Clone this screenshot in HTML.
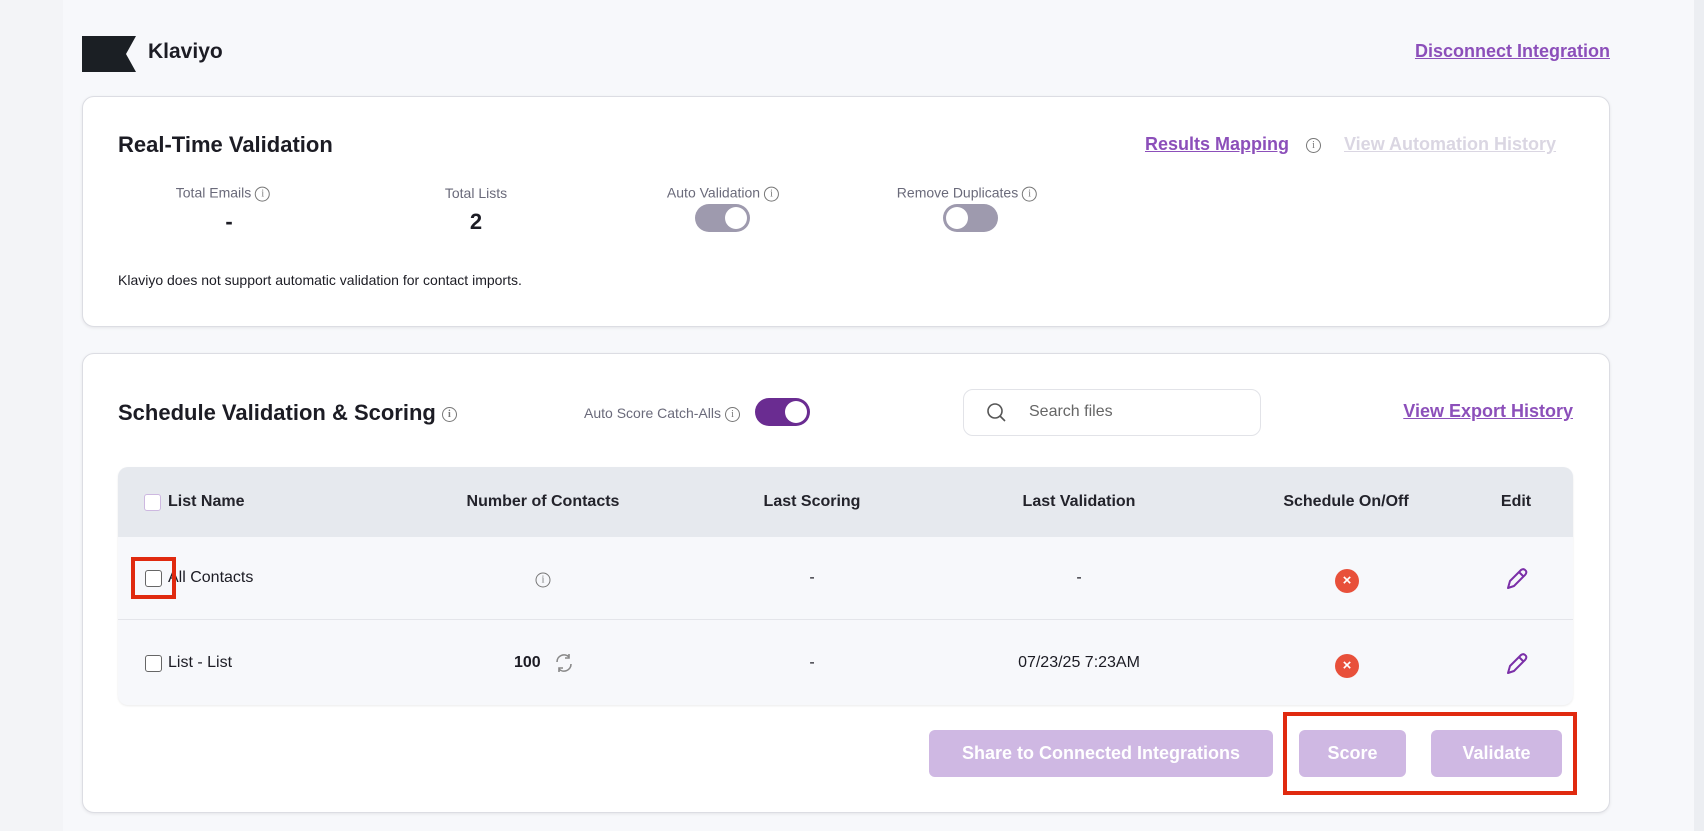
<!DOCTYPE html>
<html><head><meta charset="utf-8"><style>
*{box-sizing:border-box;margin:0;padding:0}
body{width:1704px;height:831px;overflow:hidden;background:#f7f8fb;font-family:"Liberation Sans",sans-serif;color:#1c1c24;position:relative}
.abs{position:absolute}
.lstrip{left:0;top:0;width:63px;height:831px;background:#f3f4f7}
.rstrip{left:1694px;top:0;width:10px;height:831px;background:#eceef2}
.card{position:absolute;background:#fff;border:1px solid #dcdde3;border-radius:12px;box-shadow:0 1px 3px rgba(0,0,0,.08)}
.link{color:#8c4fba;font-weight:bold;text-decoration:underline;font-size:18px;white-space:nowrap}
.t{white-space:nowrap;position:absolute;transform:translate(-50%,-50%)}
.lbl{font-size:14px;color:#6a6a7a}
.info{display:inline-block;width:15px;height:15px;border:1.3px solid #777;border-radius:50%;font-size:10px;line-height:13px;text-align:center;color:#777;font-family:"Liberation Serif",serif;vertical-align:middle;margin-left:4px}
.tog{position:absolute;width:55px;height:28px;border-radius:14px;background:#9e9aae}
.tog i{position:absolute;top:3px;width:22px;height:22px;border-radius:50%;background:#fff}
.hd{font-size:16px;font-weight:bold;color:#23232b}
.cb{position:absolute;width:17px;height:17px;border:1.5px solid #666;border-radius:3px;background:#fff}
.x{position:absolute;width:24px;height:24px;border-radius:50%;background:#e8503a;color:#fff;font-size:15px;font-weight:bold;text-align:center;line-height:24px}
.btn{position:absolute;top:730px;height:47px;background:#cfb8e3;border-radius:6px;color:#fff;font-weight:bold;font-size:18px;text-align:center;line-height:47px}
.red{position:absolute;border:4px solid #e02a0f}
</style></head><body>
<div class="abs lstrip"></div><div class="abs rstrip"></div>
<svg class="abs" style="left:82px;top:36px" width="54" height="36"><path d="M0 0H54L44 18L54 36H0Z" fill="#1b1f24"/></svg>
<div class="abs" style="left:148px;top:40px;font-size:21px;font-weight:bold">Klaviyo</div>
<div class="abs link" style="right:94px;top:41px">Disconnect Integration</div>

<div class="card" style="left:82px;top:96px;width:1528px;height:231px"></div>
<div class="abs" style="left:118px;top:132px;font-size:22px;font-weight:bold">Real-Time Validation</div>
<div class="abs link" style="left:1145px;top:134px">Results Mapping</div>
<span class="abs info" style="left:1302px;top:138px"> i</span>
<div class="abs" style="left:1344px;top:134px;font-size:18px;font-weight:bold;color:#dad6e2;text-decoration:underline">View Automation History</div>
<div class="t lbl" style="left:223px;top:193px">Total Emails<span class="info">i</span></div>
<div class="t" style="left:229px;top:222px;font-size:22px;font-weight:bold">-</div>
<div class="t lbl" style="left:476px;top:193px">Total Lists</div>
<div class="t" style="left:476px;top:222px;font-size:22px;font-weight:bold">2</div>
<div class="t lbl" style="left:723px;top:193px">Auto Validation<span class="info">i</span></div>
<div class="tog" style="left:695px;top:204px"><i style="right:3px"></i></div>
<div class="t lbl" style="left:967px;top:193px">Remove Duplicates<span class="info">i</span></div>
<div class="tog" style="left:943px;top:204px"><i style="left:3px"></i></div>
<div class="abs" style="left:118px;top:272px;font-size:14px">Klaviyo does not support automatic validation for contact imports.</div>

<div class="card" style="left:82px;top:353px;width:1528px;height:460px"></div>
<div class="abs" style="left:118px;top:400px;font-size:22px;font-weight:bold">Schedule Validation &amp; Scoring<span class="info" style="margin-left:6px">i</span></div>
<div class="abs lbl" style="left:584px;top:405px">Auto Score Catch-Alls<span class="info">i</span></div>
<div class="tog" style="left:755px;top:398px;background:#6a2c91"><i style="right:3px"></i></div>
<div class="abs" style="left:963px;top:389px;width:298px;height:47px;border:1px solid #e2e3e8;border-radius:10px;background:#fff"></div>
<svg class="abs" style="left:986px;top:402px" width="22" height="22"><circle cx="9" cy="9" r="7" fill="none" stroke="#555" stroke-width="1.6"/><path d="M14 14L19 19" stroke="#555" stroke-width="1.6"/></svg>
<div class="abs" style="left:1029px;top:403px;font-size:16px;color:#666">Search files</div>
<div class="abs link" style="right:131px;top:401px">View Export History</div>

<div class="abs" style="left:118px;top:467px;width:1455px;height:238px;border-radius:10px;background:#f7f8fb;overflow:hidden;box-shadow:0 1px 2px rgba(0,0,0,.08)">
<div style="height:70px;background:#e6e9ee"></div>
<div style="height:83px;border-bottom:1px solid #e4e5ea"></div>
</div>
<div class="cb" style="left:144px;top:494px;border-color:#cdb8e0"></div>
<div class="abs hd" style="left:168px;top:493px">List Name</div>
<div class="t hd" style="left:543px;top:502px">Number of Contacts</div>
<div class="t hd" style="left:812px;top:502px">Last Scoring</div>
<div class="t hd" style="left:1079px;top:502px">Last Validation</div>
<div class="t hd" style="left:1346px;top:502px">Schedule On/Off</div>
<div class="t hd" style="left:1516px;top:502px">Edit</div>

<div class="cb" style="left:145px;top:570px"></div>
<div class="abs" style="left:168px;top:569px;font-size:16px">All Contacts</div>
<span class="t info" style="left:543px;top:580px;margin:0"> i</span>
<div class="t" style="left:812px;top:578px">-</div>
<div class="t" style="left:1079px;top:578px">-</div>
<div class="x" style="left:1335px;top:569px">×</div>
<svg class="abs" style="left:1503px;top:566px" width="26" height="26"><path d="M5 22L7 15L18 4Q21 2 23 5Q24 7 22 9L11 20Z M16 6L21 11" fill="none" stroke="#7b2fa8" stroke-width="2" stroke-linejoin="round"/></svg>

<div class="cb" style="left:145px;top:655px"></div>
<div class="abs" style="left:168px;top:654px;font-size:16px">List - List</div>
<div class="abs" style="left:514px;top:654px;font-size:16px;font-weight:bold">100</div>
<svg class="abs" style="left:553px;top:652px" width="22" height="22"><path d="M4 10A7 7 0 0 1 16 5M18 12A7 7 0 0 1 6 17" fill="none" stroke="#888" stroke-width="1.6"/><path d="M16 2V6H12M6 20V16H10" fill="none" stroke="#888" stroke-width="1.6"/></svg>
<div class="t" style="left:812px;top:663px">-</div>
<div class="t" style="left:1079px;top:663px;font-size:16px">07/23/25 7:23AM</div>
<div class="x" style="left:1335px;top:654px">×</div>
<svg class="abs" style="left:1503px;top:651px" width="26" height="26"><path d="M5 22L7 15L18 4Q21 2 23 5Q24 7 22 9L11 20Z M16 6L21 11" fill="none" stroke="#7b2fa8" stroke-width="2" stroke-linejoin="round"/></svg>

<div class="red" style="left:131px;top:557px;width:45px;height:42px"></div>

<div class="btn" style="left:929px;width:344px">Share to Connected Integrations</div>
<div class="btn" style="left:1299px;width:107px">Score</div>
<div class="btn" style="left:1431px;width:131px">Validate</div>
<div class="red" style="left:1283px;top:712px;width:294px;height:83px"></div>
</body></html>
